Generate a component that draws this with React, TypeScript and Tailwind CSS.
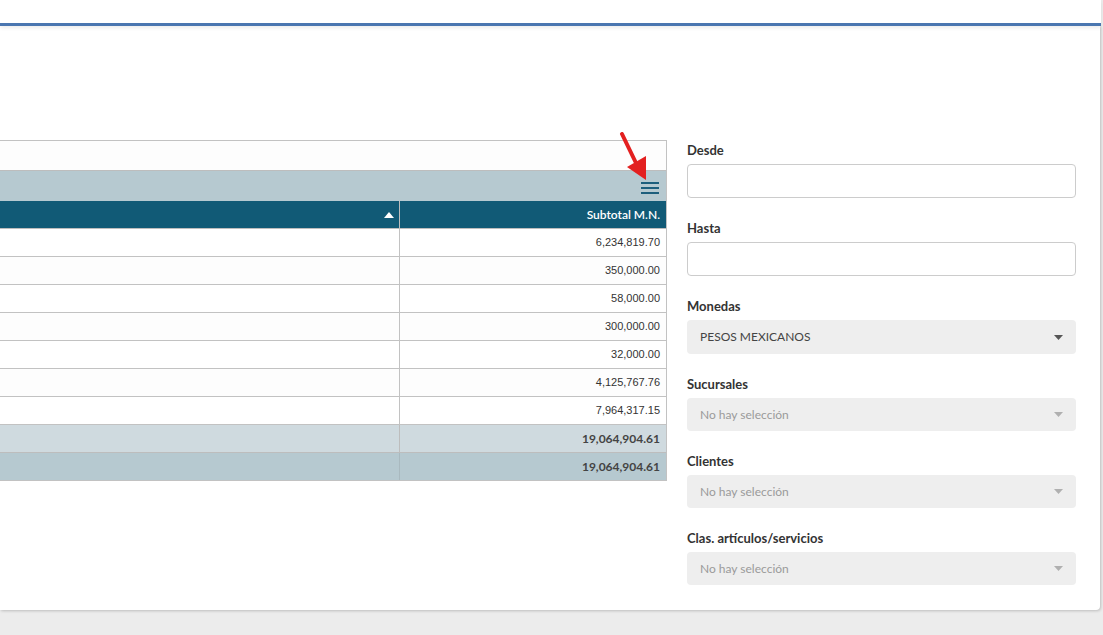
import type { ReactNode } from "react";

const rows = [
  "6,234,819.70",
  "350,000.00",
  "58,000.00",
  "300,000.00",
  "32,000.00",
  "4,125,767.76",
  "7,964,317.15",
];

function Caret({ muted }: { muted?: boolean }) {
  return (
    <svg width="9" height="5" viewBox="0 0 9 5" className={muted ? "text-[#b0b0b0]" : "text-[#555]"}>
      <path d="M0 0 L9 0 L4.5 5 Z" fill="currentColor" />
    </svg>
  );
}

function Field({ label, children }: { label: string; children: ReactNode }) {
  return (
    <div className="flex flex-col">
      <label className="h-[18px] text-[13px] leading-[18px] font-bold text-[#333] mb-[5px]">{label}</label>
      {children}
    </div>
  );
}

function TextInput() {
  return <div className="h-[34px] rounded-[4px] border border-[#cccccc] bg-white" />;
}

function Select({ value, placeholder, tall }: { value?: string; placeholder?: string; tall?: boolean }) {
  return (
    <div
      className={`${tall ? "h-[34px]" : "h-[33px]"} rounded-[4px] bg-[#eeeeee] flex items-center justify-between pl-[13px] pr-[13px]`}
    >
      <span className={`text-[12px] ${value ? "text-[#444]" : "text-[#9a9a9a]"}`}>{value ?? placeholder}</span>
      <Caret muted={!value} />
    </div>
  );
}

export default function App() {
  return (
    <div className="w-[1103px] h-[635px] bg-[#ececec] overflow-hidden font-['Lato',sans-serif] relative">
      <div className="w-[1101px]">
        {/* Top bar */}
        <header className="h-[26px] bg-white border-b-[3px] border-[#4a76b0] shadow-[0_2px_4px_rgba(0,0,0,0.08)] relative z-10" />

        {/* Card */}
        <div className="w-[1100px] h-[584px] bg-white rounded-br-[4px] shadow-[1px_1px_3px_rgba(0,0,0,0.2)] flex pt-[114px]">
          {/* Table */}
          <div className="w-[667px] self-start border-t border-r border-b border-[#c2c2c2] relative">
            <div className="h-[30px] bg-[#fdfdfd] border-b border-[#bdbdbd]" />
            <div className="h-[30px] bg-[#b6c9d0] flex items-center justify-end pr-[7px]">
              <div className="flex flex-col gap-[3px] w-[18px] mt-[3px]">
                <span className="h-[2px] bg-[#1d5e7c]" />
                <span className="h-[2px] bg-[#1d5e7c]" />
                <span className="h-[2px] bg-[#1d5e7c]" />
              </div>
            </div>
            <div className="h-[28px] bg-[#115a76] flex border-b border-[#bdbdbd] text-white">
              <div className="w-[400px] border-r border-[#bdbdbd] flex items-center justify-end pr-[5px]">
                <svg width="10" height="6" viewBox="0 0 10 6">
                  <path d="M0 6 L10 6 L5 0 Z" fill="#ffffff" />
                </svg>
              </div>
              <div className="flex-1 flex items-center justify-end pr-[6px] text-[12px] font-semibold">Subtotal M.N.</div>
            </div>
            {rows.map((v, i) => (
              <div key={v} className={`h-[28px] flex border-b border-[#c2c2c2] ${i % 2 ? "bg-[#fdfdfd]" : "bg-white"}`}>
                <div className="w-[400px] border-r border-[#c2c2c2]" />
                <div className="flex-1 flex items-center justify-end pr-[6px] text-[11px] text-[#333] font-['Liberation_Sans',sans-serif]">
                  {v}
                </div>
              </div>
            ))}
            <div className="h-[28px] flex border-b border-[#bdbdbd] bg-[#cfdadf]">
              <div className="w-[400px] border-r border-[#bdbdbd]" />
              <div className="flex-1 flex items-center justify-end pr-[6px] text-[12px] font-bold text-[#444]">19,064,904.61</div>
            </div>
            <div className="h-[27px] flex bg-[#b6c9d0]">
              <div className="w-[400px] border-r border-[#a9b9bf]" />
              <div className="flex-1 flex items-center justify-end pr-[6px] text-[12px] font-bold text-[#444]">19,064,904.61</div>
            </div>

            {/* Red arrow annotation */}
            <svg className="absolute left-[615px] top-[-9px]" width="40" height="52" viewBox="0 0 40 52">
              <path d="M7 2 L21 31" stroke="#e32020" strokeWidth="4" strokeLinecap="round" />
              <path d="M12 35 L31 24 L31 48 Z" fill="#e32020" />
            </svg>
          </div>

          {/* Filters */}
          <div className="ml-[20px] w-[389px] flex flex-col gap-[21px] pt-[1px]">
            <Field label="Desde">
              <TextInput />
            </Field>
            <Field label="Hasta">
              <TextInput />
            </Field>
            <Field label="Monedas">
              <Select value="PESOS MEXICANOS" tall />
            </Field>
            <Field label="Sucursales">
              <Select placeholder="No hay selección" />
            </Field>
            <Field label="Clientes">
              <Select placeholder="No hay selección" />
            </Field>
            <Field label="Clas. artículos/servicios">
              <Select placeholder="No hay selección" />
            </Field>
          </div>
        </div>
      </div>
    </div>
  );
}
